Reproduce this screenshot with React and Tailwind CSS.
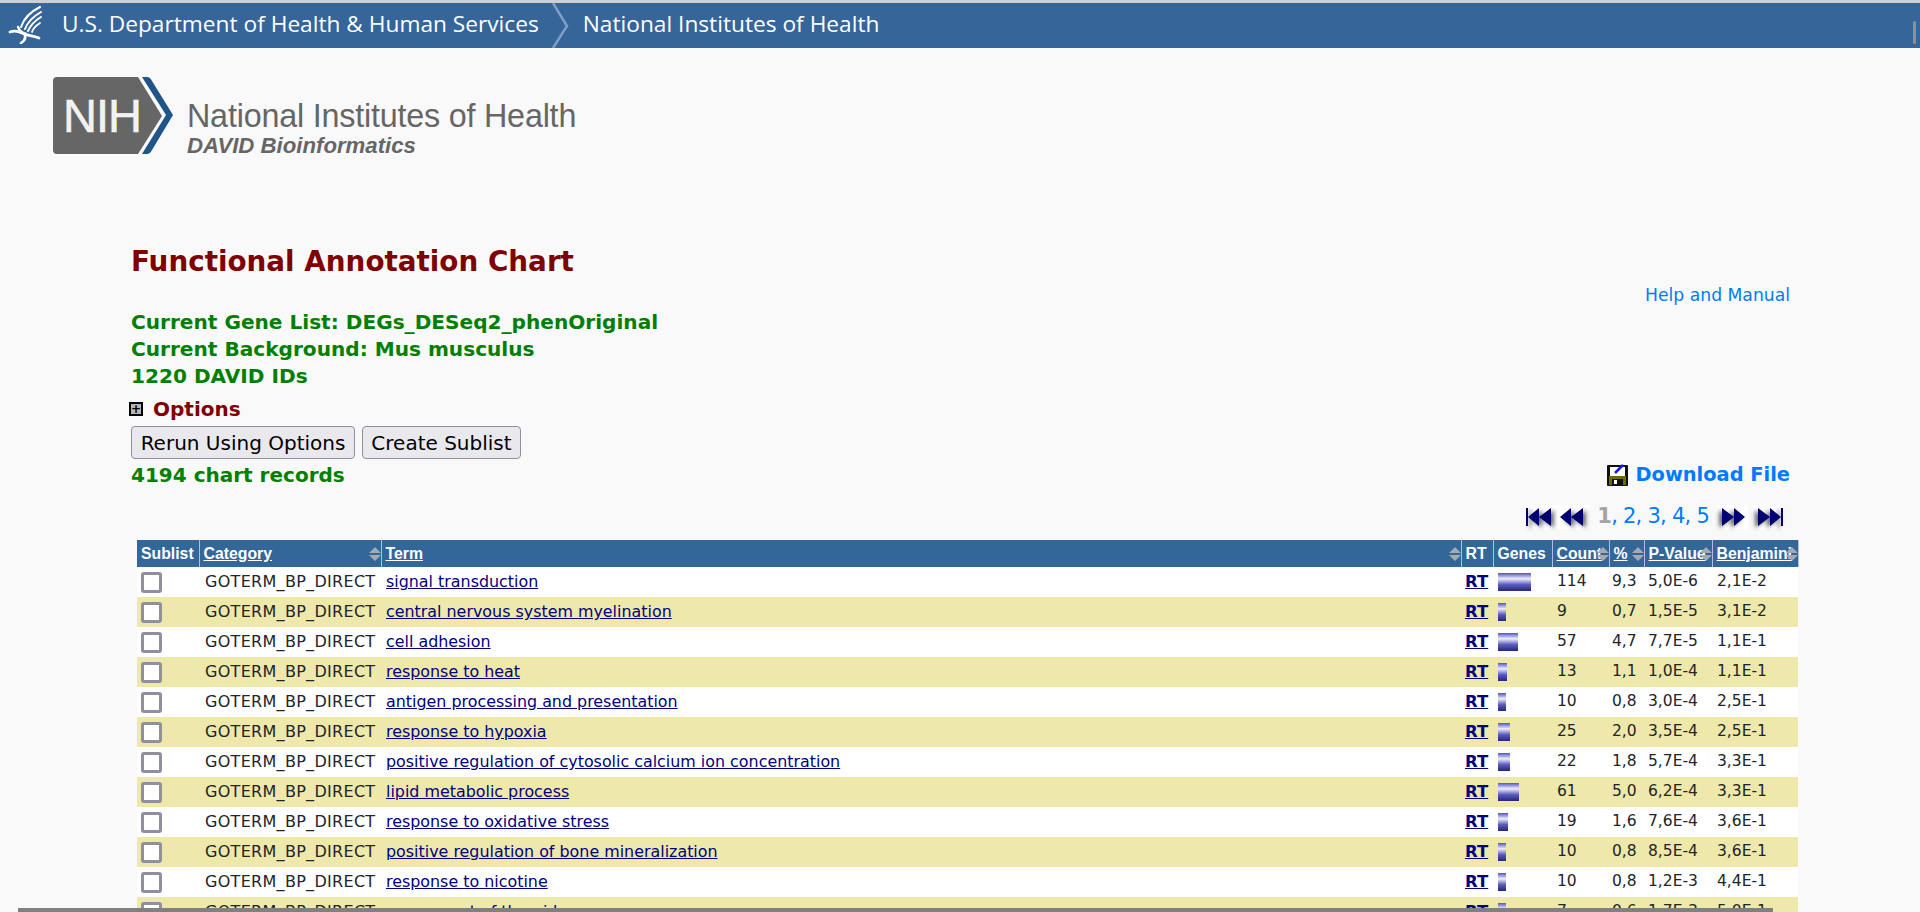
import React from 'react';

const rows = [
  ['signal transduction', 114, '9,3', '5,0E-6', '2,1E-2', 33],
  ['central nervous system myelination', 9, '0,7', '1,5E-5', '3,1E-2', 8],
  ['cell adhesion', 57, '4,7', '7,7E-5', '1,1E-1', 20],
  ['response to heat', 13, '1,1', '1,0E-4', '1,1E-1', 9],
  ['antigen processing and presentation', 10, '0,8', '3,0E-4', '2,5E-1', 8],
  ['response to hypoxia', 25, '2,0', '3,5E-4', '2,5E-1', 12],
  ['positive regulation of cytosolic calcium ion concentration', 22, '1,8', '5,7E-4', '3,3E-1', 12],
  ['lipid metabolic process', 61, '5,0', '6,2E-4', '3,3E-1', 21],
  ['response to oxidative stress', 19, '1,6', '7,6E-4', '3,6E-1', 10],
  ['positive regulation of bone mineralization', 10, '0,8', '8,5E-4', '3,6E-1', 8],
  ['response to nicotine', 10, '0,8', '1,2E-3', '4,4E-1', 8],
  ['component of thyroid', 7, '0,6', '1,7E-3', '5,0E-1', 8],
];

function Eagle() {
  return (
    <svg width="36" height="38" viewBox="0 0 36 38" fill="none" stroke="white" strokeLinecap="round" className="shrink-0">
      <path d="M32 1 C24 5 16 12 13 21" strokeWidth="2" />
      <path d="M33 6 C26 10 20 15 17 23" strokeWidth="2" />
      <path d="M33 11 C28 14 23 18 20 25" strokeWidth="2" />
      <path d="M32 17 C29 19 25 22 24 26" strokeWidth="1.8" />
      <path d="M2 26 C7 24 10 25 14 27 C19 30 24 29 31 32" strokeWidth="2.8" />
      <path d="M10 21 C11 24 14 27 18 28" strokeWidth="2.4" />
      <path d="M17 30 C18 33 16 35 13 37" strokeWidth="2.6" />
    </svg>
  );
}

function NihLogo() {
  return (
    <svg width="126" height="78" viewBox="0 0 126 78" className="shrink-0">
      <path d="M4 0 H85 L109 39 L85 77 H4 Q0 77 0 73 V4 Q0 0 4 0 Z" fill="#666666" />
      <path d="M89 0 H94 Q97 0 99 4 L120 38 L99 73 Q97 77 94 77 H89 L113 38 Z" fill="#20558a" />
      <text x="10" y="55" fontFamily="Liberation Sans, sans-serif" fontSize="47" fill="#f2f2f2" stroke="#f2f2f2" strokeWidth="0.6" letterSpacing="-1">NIH</text>
    </svg>
  );
}

function SortArrows() {
  return (
    <svg width="12" height="16" viewBox="0 0 12 16" className="absolute right-0 top-[6px]">
      <path d="M6 1 L12 7 H0 Z M6 15 L12 9 H0 Z" fill="#a3aab3" />
    </svg>
  );
}

function PagerIcon({ dir, bar }) {
  const flip = dir === 'right' ? 'scale-x-[-1]' : '';
  return (
    <span className={`inline-block bg-white w-[32px] h-[24px] ${flip}`}>
      <svg width="32" height="24" viewBox="0 0 32 24" className="drop-shadow-[3px_2px_2px_rgba(0,0,0,0.6)]">
        {bar && <rect x="1" y="3" width="2" height="18" fill="#000070" />}
        <path d="M3 12 L14 3 V21 Z M14 12 L26 3 V21 Z" fill="#000070" />
      </svg>
    </span>
  );
}

function SaveIcon() {
  return (
    <svg width="21" height="22" viewBox="0 0 21 22" className="shrink-0">
      <rect x="0" y="1" width="21" height="21" rx="1" fill="#111" />
      <rect x="3" y="3" width="15" height="9" fill="#fff" />
      <path d="M8 9 L16 1" stroke="#1a1aee" strokeWidth="2.5" />
      <rect x="2" y="12" width="17" height="9" fill="#6b6b00" />
      <rect x="5" y="15" width="11" height="7" fill="#111" />
      <rect x="7" y="16" width="3" height="4" fill="#fff" />
    </svg>
  );
}

function Th({ children, link, sort, className = '' }) {
  return (
    <th className={`relative border-l border-[#b9b9e6] px-[4px] text-left font-bold whitespace-nowrap overflow-hidden ${className}`}>
      {link ? <span className="underline">{children}</span> : children}
      {sort && <SortArrows />}
    </th>
  );
}

export default function App() {
  return (
    <div className="relative h-[912px] overflow-hidden bg-[#f9f9f9] text-[#212529] font-['DejaVu_Sans',sans-serif]">
      <div className="h-[3px] bg-[#cfcfcf]"></div>
      {/* top bar */}
      <header className="h-[45px] bg-[#36659a] flex items-center pl-[8px] pb-[2px] text-white font-['Open_Sans',sans-serif] text-[22.7px]">
        <Eagle />
        <span className="ml-[18px]">U.S. Department of Health &amp; Human Services</span>
        <svg width="20" height="45" viewBox="0 0 20 45" className="ml-[12px] mb-[-2px]" fill="none">
          <path d="M2 0 L16 23 L2 45" stroke="#7f9fc2" strokeWidth="2.5" />
        </svg>
        <span className="ml-[12px]">National Institutes of Health</span>
      </header>

      {/* logo */}
      <div className="flex items-start pl-[53px] pt-[29px] text-[#666666] font-['Liberation_Sans',sans-serif]">
        <NihLogo />
        <div className="ml-[8px] pt-[21px]">
          <div className="text-[32.3px] leading-[36px] tracking-[-0.2px]">National Institutes of Health</div>
          <div className="text-[22.2px] leading-[23px] italic font-bold">DAVID Bioinformatics</div>
        </div>
      </div>

      <main className="pl-[131px] pr-[130px]">
        <h1 className="mt-[89px] text-[27.8px] leading-[32px] font-bold text-[#800000]">Functional Annotation Chart</h1>

        <div className="mt-[31px] flex justify-between">
          <div className="text-[20.1px] leading-[27px] font-bold text-[#008000]">
            <div>Current Gene List: DEGs_DESeq2_phenOriginal</div>
            <div>Current Background: Mus musculus</div>
            <div>1220 DAVID IDs</div>
          </div>
          <a className="text-[17.2px] leading-[24px] text-[#007bff] mt-[-26px]">Help and Manual</a>
        </div>

        <div className="mt-[5px] flex items-center h-[27px] text-[20px] font-bold text-[#800000]">
          <span className="ml-[-2px] w-[14px] h-[14px] border-2 border-black bg-[#b5b5b5] flex items-center justify-center text-[12px] leading-none text-black">+</span>
          <span className="ml-[10px]">Options</span>
        </div>

        <div className="mt-[4px] flex gap-[7px] text-[20px] text-black">
          <button className="h-[33px] w-[224px] rounded-[4px] border border-[#8f8f9d] bg-[#e9e9ed]">Rerun Using Options</button>
          <button className="h-[33px] w-[159px] rounded-[4px] border border-[#8f8f9d] bg-[#e9e9ed]">Create Sublist</button>
        </div>

        <div className="mt-[1px] flex justify-between items-center h-[30px]">
          <span className="text-[20px] font-bold text-[#008000]">4194 chart records</span>
          <span className="flex items-center gap-[7px] text-[19.4px] font-bold text-[#007bff]">
            <SaveIcon />
            Download File
          </span>
        </div>

        <div className="mt-[12px] flex justify-end items-center h-[30px] text-[21px] tracking-[-0.75px] text-[#007bff] pr-[6px]">
          <PagerIcon bar />
          <PagerIcon />
          <span className="ml-[8px] font-bold text-[#a3a3a3]">1</span>
          <span>, 2, 3, 4, 5</span>
          <span className="ml-[7px]"></span>
          <PagerIcon dir="right" />
          <span className="ml-[4px]"></span>
          <PagerIcon dir="right" bar />
        </div>

        <table className="ml-[6px] mt-[8px] w-[1661px] table-fixed border-collapse text-[15.5px]">
          <colgroup>
            <col className="w-[62px]" />
            <col className="w-[182px]" />
            <col className="w-[1080px]" />
            <col className="w-[32px]" />
            <col className="w-[59px]" />
            <col className="w-[57px]" />
            <col className="w-[35px]" />
            <col className="w-[68px]" />
            <col className="w-[86px]" />
          </colgroup>
          <thead>
            <tr className="h-[27px] bg-[#336699] text-white text-[15.8px] font-['Liberation_Sans',sans-serif]">
              <Th className="border-l-0">Sublist</Th>
              <Th link sort>Category</Th>
              <Th link sort>Term</Th>
              <Th>RT</Th>
              <Th>Genes</Th>
              <Th link sort>Count</Th>
              <Th link sort>%</Th>
              <Th link sort>P-Value</Th>
              <Th link sort className="border-r">Benjamini</Th>
            </tr>
          </thead>
          <tbody>
            {rows.map((r, i) => (
              <tr key={r[0]} className={`h-[30px] ${i % 2 ? 'bg-[#eee8aa]' : 'bg-white'}`}>
                <td className="pl-[4px]">
                  <input type="checkbox" className="block appearance-none w-[21px] h-[21px] bg-white border-[3px] border-[#8f8f9d] rounded-[3px]" />
                </td>
                <td className="pl-[6px] whitespace-nowrap text-[16px] tracking-[0.3px]">GOTERM_BP_DIRECT</td>
                <td className="pl-[5px] whitespace-nowrap text-[15.9px] text-[#000080] underline">{r[0]}</td>
                <td className="pl-[4px] text-[16.5px] font-bold text-[#000080] underline">RT</td>
                <td className="pl-[5px]">
                  <div
                    className="h-[18px] bg-[linear-gradient(to_bottom,#5252c4_0%,#eeeefb_32%,#5a5ac0_65%,#26267a_100%)]"
                    style={{ width: r[5] }}
                  ></div>
                </td>
                <td className="pl-[5px]">{r[1]}</td>
                <td className="pl-[3px]">{r[2]}</td>
                <td className="pl-[4px]">{r[3]}</td>
                <td className="pl-[5px]">{r[4]}</td>
              </tr>
            ))}
          </tbody>
        </table>
      </main>

      {/* scrollbars */}
      <div className="absolute left-[18px] bottom-0 w-[1755px] h-[4px] bg-[#808080]"></div>
      <div className="absolute right-[4px] top-[21px] w-[3px] h-[23px] rounded-sm bg-[#8f8f8f]"></div>
    </div>
  );
}
